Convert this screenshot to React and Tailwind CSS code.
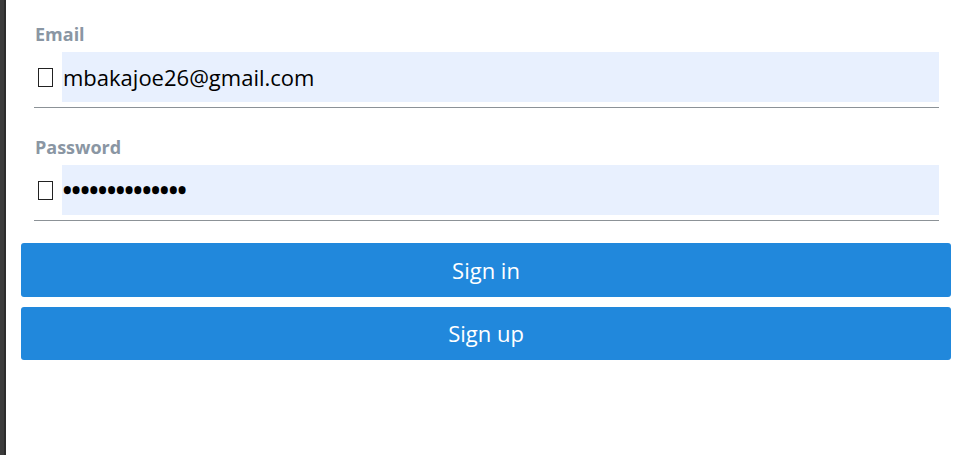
export default function App() {
  const font = { fontFamily: '"Open Sans", "Noto Sans", sans-serif' };
  return (
    <div className="flex h-[455px] w-[966px] bg-white overflow-hidden" style={font}>
      <div className="flex h-full w-[6px] shrink-0">
        <div className="h-full w-[4px] bg-[#3c3c3c]" />
        <div className="h-full w-[2px] bg-[#2c2c2c]" />
      </div>
      <div className="flex flex-1 flex-col pl-[15px] pr-[15px] pt-[23px]">
        <div className="flex flex-col pl-[13px] pr-[12px]">
          <Field label="Email">
            <span className="text-[22px] leading-[30px] text-black">mbakajoe26@gmail.com</span>
          </Field>
          <div className="h-[28px]" />
          <Field label="Password">
            <span className="text-[22px] font-extrabold leading-[30px] tracking-[0.2px] text-black">••••••••••••••</span>
          </Field>
        </div>
        <button className="mt-[22px] flex h-[54px] w-full items-center justify-center rounded-[3px] bg-[#2188dc] text-[22px] text-white">
          Sign in
        </button>
        <button className="mt-[10px] flex h-[53px] w-full items-center justify-center rounded-[3px] bg-[#2188dc] text-[22px] text-white">
          Sign up
        </button>
      </div>
    </div>
  );
}

function Field({ label, children }) {
  return (
    <div className="flex flex-col">
      <div className="pl-[1px] text-[18px] font-bold leading-[22px] text-[#8a96a3]">{label}</div>
      <div className="mt-[7px] flex h-[50px] items-center">
        <div className="ml-[4px] h-[19px] w-[15px] shrink-0 border border-[#222]" />
        <div className="ml-[9px] flex h-full flex-1 items-center bg-[#e8f0fe] pl-[1px]">{children}</div>
      </div>
      <div className="mt-[5px] h-[1px] w-full bg-[#8c9297]" />
    </div>
  );
}
